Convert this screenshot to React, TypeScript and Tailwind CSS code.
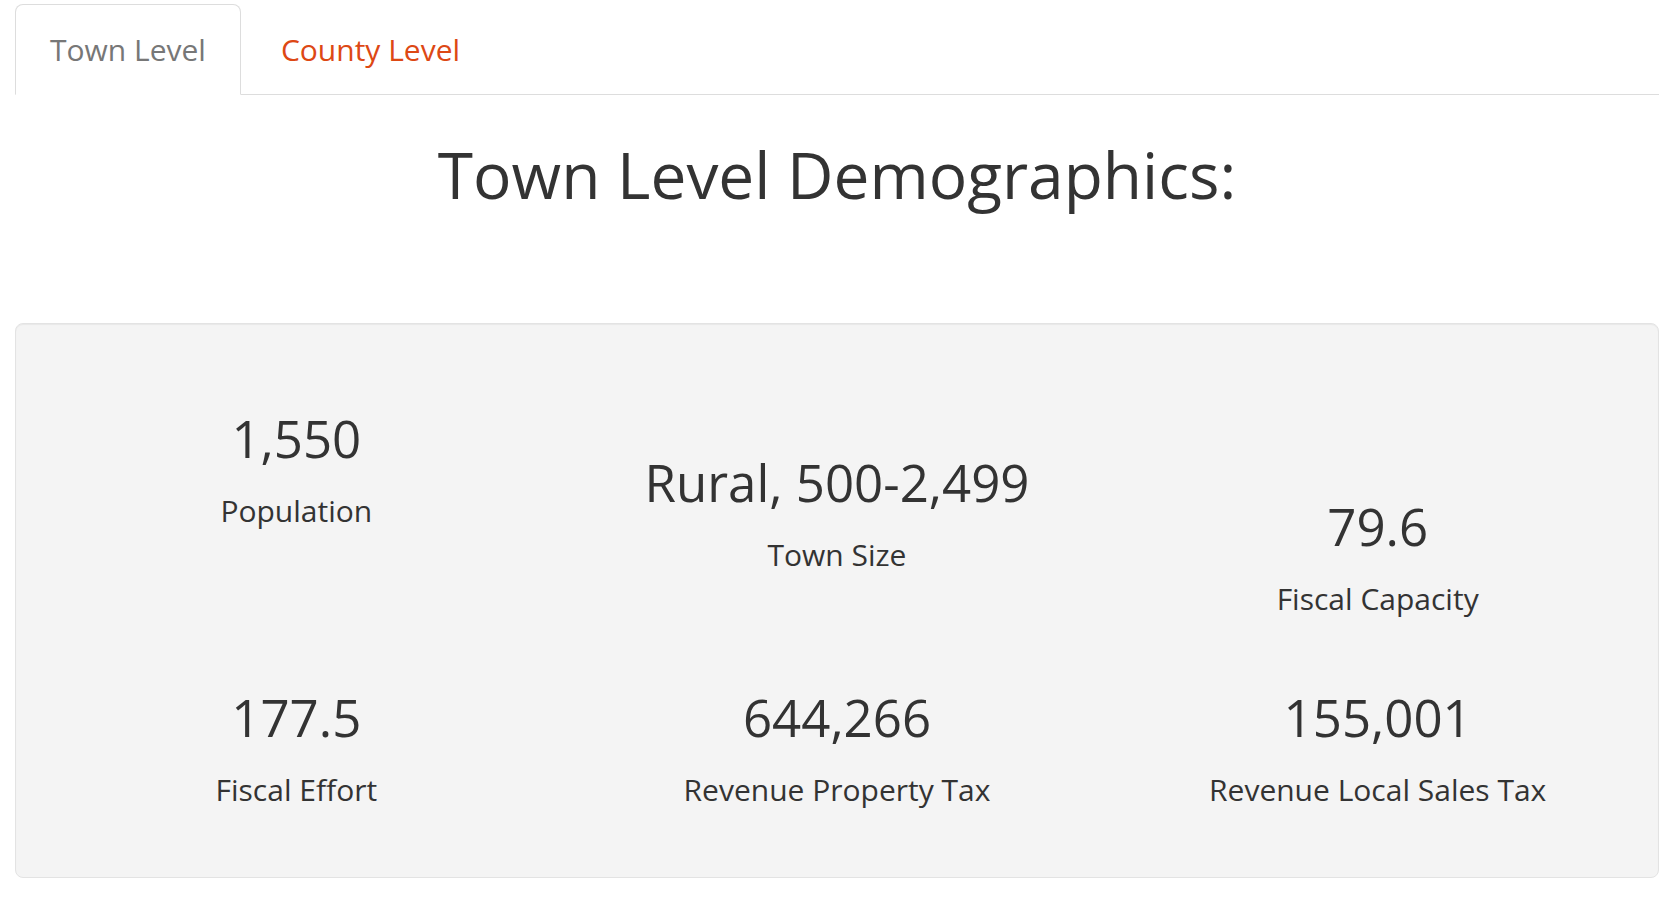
const stats = [
  { value: '1,550', label: 'Population', offset: 'mt-0' },
  { value: 'Rural, 500-2,499', label: 'Town Size', offset: 'mt-[44px]' },
  { value: '79.6', label: 'Fiscal Capacity', offset: 'mt-[88px]' },
  { value: '177.5', label: 'Fiscal Effort', offset: 'mt-0' },
  { value: '644,266', label: 'Revenue Property Tax', offset: 'mt-0' },
  { value: '155,001', label: 'Revenue Local Sales Tax', offset: 'mt-0' }
];

function Stat({ value, label, offset }: { value: string; label: string; offset: string }) {
  return (
    <div className={`flex flex-col items-center text-center ${offset}`}>
      <div className="text-[51px] leading-[56px] text-[#333]">{value}</div>
      <div className="mt-[27px] text-[30px] leading-[36px] text-[#333]">{label}</div>
    </div>
  );
}

export default function App() {
  return (
    <div className="min-h-screen w-full bg-white pl-[15px] pr-[1px] pt-[4px] font-['Open_Sans',sans-serif]">
      {/* tabs */}
      <ul className="flex border-b border-[#ddd]">
        <li className="-mb-px flex h-[91px] items-center rounded-t-[8px] border border-[#ddd] border-b-transparent bg-white px-[34px] text-[30px] text-[#777]">
          Town Level
        </li>
        <li className="-mb-px ml-[4px] flex h-[91px] items-center border border-transparent px-[35px] text-[30px] text-[#dd4814]">
          County Level
        </li>
      </ul>

      <h1 className="mt-[40px] text-center text-[64px] leading-[80px] text-[#333]">
        Town Level Demographics:
      </h1>

      {/* stats well */}
      <div className="mt-[108px] rounded-[8px] border border-[#e3e3e3] bg-[#f4f4f4] px-[10px] pb-[69px] pt-[86px] shadow-[inset_0_1px_1px_rgba(0,0,0,0.05)]">
        <div className="grid grid-cols-3 items-start gap-y-[72px]">
          {stats.map((s, i) => (
            <Stat key={i} value={s.value} label={s.label} offset={s.offset} />
          ))}
        </div>
      </div>
    </div>
  );
}
